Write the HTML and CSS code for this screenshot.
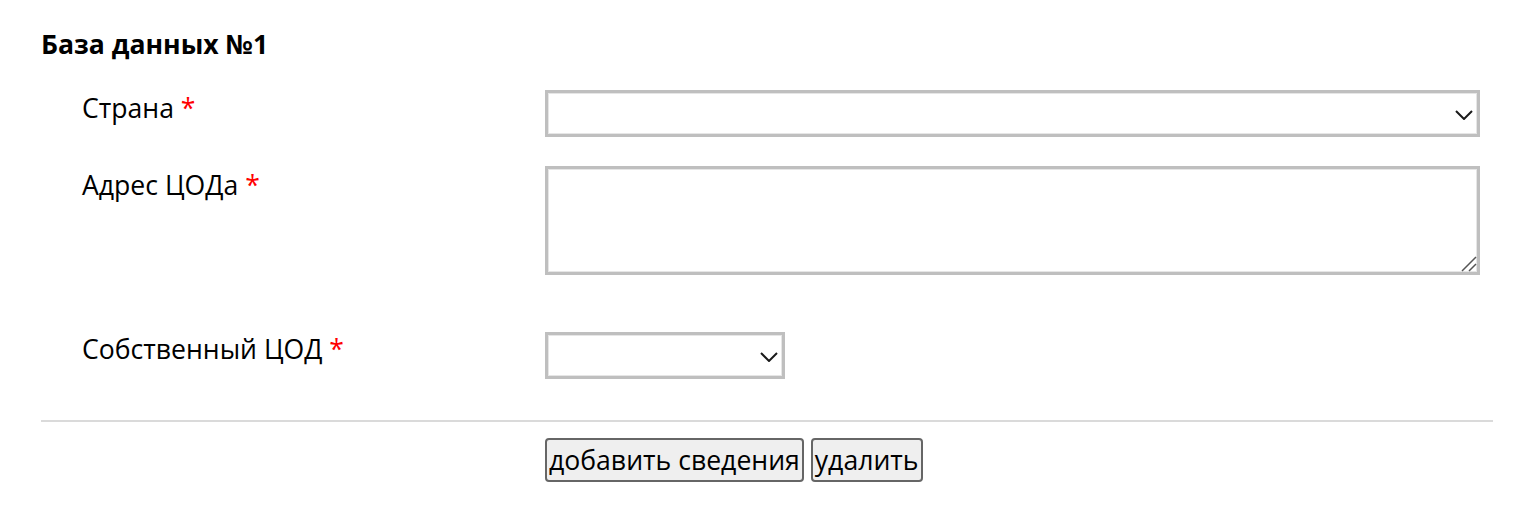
FILE: index.html
```html
<!DOCTYPE html>
<html lang="ru">
<head>
<meta charset="utf-8">
<link rel="stylesheet" href="styles.css">
</head>
<body>
<div class="page">
  <h2 class="title">База данных №1</h2>
  <div class="form">
    <div class="label row1">Страна <span class="req">*</span></div>
    <div class="field row1">
      <div class="select wide"><svg class="chev" width="18" height="10" viewBox="0 0 18 10"><path d="M1 1 L9 9 L17 1" fill="none" stroke="#1a1a1a" stroke-width="2"/></svg></div>
    </div>
    <div class="label row2">Адрес ЦОДа <span class="req">*</span></div>
    <div class="field row2">
      <div class="textarea"><svg class="grip" width="16" height="16" viewBox="0 0 16 16"><path d="M15 1 L1 15 M15 8 L8 15" stroke="#555" stroke-width="1.5"/></svg></div>
    </div>
    <div class="label row3">Собственный ЦОД <span class="req">*</span></div>
    <div class="field row3">
      <div class="select small"><svg class="chev" width="18" height="10" viewBox="0 0 18 10"><path d="M1 1 L9 9 L17 1" fill="none" stroke="#1a1a1a" stroke-width="2"/></svg></div>
    </div>
  </div>
  <div class="divider"></div>
  <div class="actions">
    <button class="btn">добавить сведения</button>
    <button class="btn">удалить</button>
  </div>
</div>
</body>
</html>
```
FILE: styles.css
```css
* { box-sizing: border-box; }
body {
  margin: 0;
  background: #fff;
  font-family: "Open Sans", "Noto Sans", sans-serif;
  color: #000;
}
.page {
  padding: 26px 35px 0 41px;
}
.title {
  margin: 0;
  font-size: 26.6px;
  font-weight: 700;
  line-height: 36px;
}
.form {
  display: grid;
  grid-template-columns: 504px 935px;
  margin-top: 28px;
}
.label {
  padding-left: 41px;
  font-size: 26.6px;
  line-height: 36px;
}
.req { color: #ff0000; }
.row2 { margin-top: 29px; }
.row2.label { margin-top: 30px; }
.row3 { margin-top: 57px; }
.row3.label { margin-top: 56px; }
.select {
  position: relative;
  height: 47px;
  border: 3px solid #bfbfbf;
  box-shadow: inset 0 0 0 1px #e6e6e6;
  background: #fff;
}
.wide { width: 935px; }
.small { width: 240px; }
.chev {
  position: absolute;
  right: 4px;
  top: 17px;
}
.textarea {
  position: relative;
  height: 109px;
  width: 935px;
  border: 3px solid #bfbfbf;
  box-shadow: inset 0 0 0 1px #e6e6e6;
}
.grip {
  position: absolute;
  right: 0;
  bottom: 0;
}
.divider {
  height: 2px;
  background: #dadada;
  margin-top: 41px;
  width: 1452px;
}
.actions {
  display: flex;
  gap: 7px;
  padding-left: 504px;
  margin-top: 16px;
}
.btn {
  font-family: "Open Sans", "Noto Sans", sans-serif;
  font-size: 26.6px;
  height: 44px;
  padding: 0 2px;
  line-height: 40px;
  background: #efefef;
  border: 2px solid #666;
  border-radius: 4px;
  color: #000;
}
```
